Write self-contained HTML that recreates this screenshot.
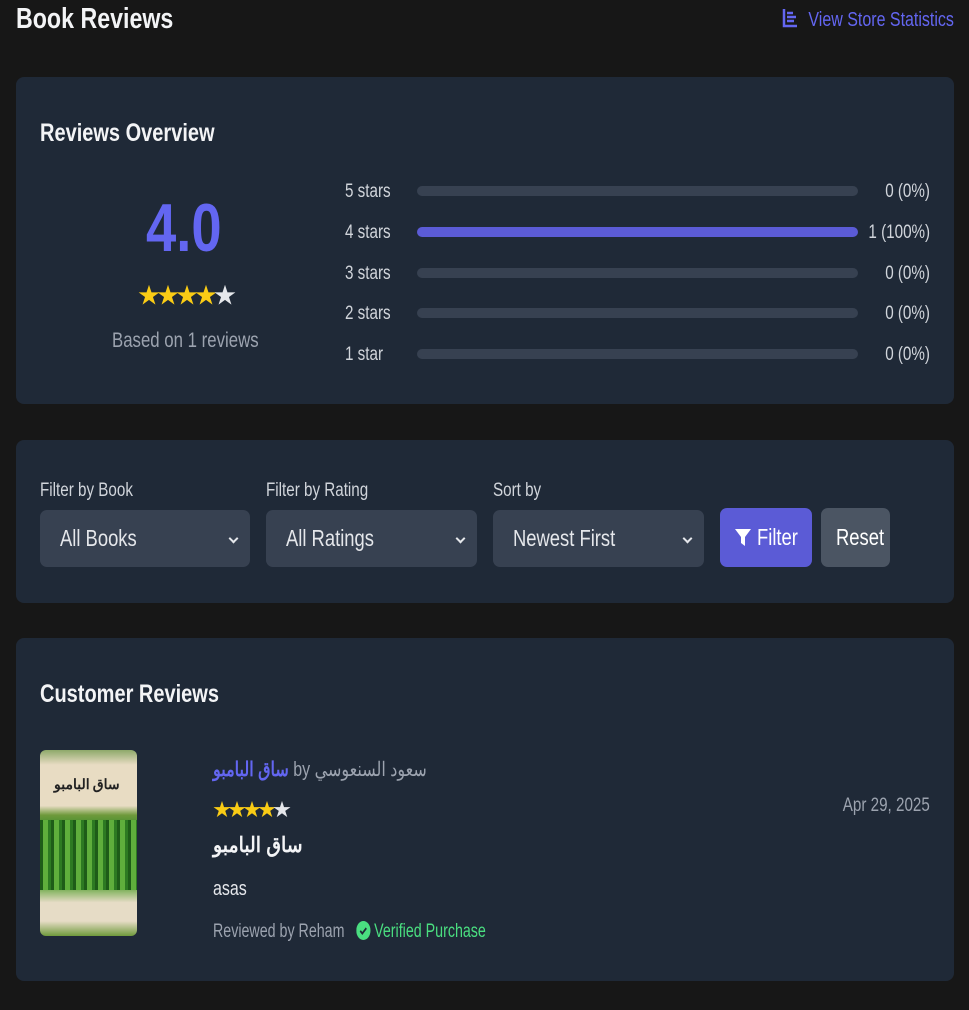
<!DOCTYPE html>
<html><head><meta charset="utf-8"><style>
*{box-sizing:border-box;margin:0;padding:0}
body{width:969px;height:1010px;background:#171717;font-family:"Liberation Sans","Noto Sans CJK SC",sans-serif;color:#e5e7eb;position:relative;overflow:hidden}
.abs{position:absolute;white-space:nowrap}
.n{display:inline-block;transform:scaleX(.8);transform-origin:0 50%;white-space:nowrap}
.r{transform-origin:100% 50%}
h1{position:absolute;left:16px;top:3px;font-size:29px;font-weight:bold;color:#f3f4f6}
.link{position:absolute;right:15px;top:8px;font-size:20px;color:#6366f1;white-space:nowrap}
.card{position:absolute;left:16px;width:938px;background:#1f2937;border-radius:8px}
h2{position:absolute;left:24px;font-size:25px;font-weight:bold;color:#f3f4f6;white-space:nowrap}
.lbl{position:absolute;font-size:19px;color:#d1d5db;white-space:nowrap}
.bar{position:absolute;left:401px;width:441px;height:10px;border-radius:5px;background:#374151}
.cnt{position:absolute;right:24px;font-size:19px;color:#d1d5db;white-space:nowrap}
.sel{position:absolute;top:70px;height:57px;background:#374151;border-radius:7px;font-size:23px;color:#e5e7eb;padding:15px 20px;white-space:nowrap}
.sel:after{content:"";position:absolute;right:13px;top:25px;width:5px;height:5px;border-right:2px solid #e5e7eb;border-bottom:2px solid #e5e7eb;transform:rotate(45deg)}
.btn{position:absolute;top:68px;height:59px;border-radius:7px;font-size:23px;color:#fff;padding:16px 15px;white-space:nowrap}
.star{color:#facc15}
</style></head><body>
<h1><span class="n">Book Reviews</span></h1>
<div class="link"><svg width="16" height="20" viewBox="0 0 16 20" style="vertical-align:-2px"><path d="M2 1v17h13" stroke="#6366f1" stroke-width="2.5" fill="none"/><path d="M5 5h6M5 9h9M5 13h7" stroke="#6366f1" stroke-width="2.5"/></svg><span class="n r" style="margin-left:-26px">View Store Statistics</span></div>

<div class="card" style="top:77px;height:327px">
<h2 style="top:42px"><span class="n">Reviews Overview</span></h2>
<div class="abs" style="left:130px;top:112px;font-size:68px;font-weight:bold;color:#6366f1"><span class="n">4.0</span></div>
<div class="abs" style="left:122px;top:201px;font-size:22px;letter-spacing:-3px"><span class="star">★★★★</span><span style="color:#e5e7eb">★</span></div>
<div class="abs" style="left:96px;top:252px;font-size:21px;color:#9ca3af"><span class="n">Based on 1 reviews</span></div>
<div class="lbl" style="left:329px;top:104px"><span class="n">5 stars</span></div><div class="bar" style="top:109px"></div><div class="cnt" style="top:104px"><span class="n r">0 (0%)</span></div>
<div class="lbl" style="left:329px;top:145px"><span class="n">4 stars</span></div><div class="bar" style="top:150px;background:#5b5bd6"></div><div class="cnt" style="top:145px"><span class="n r">1 (100%)</span></div>
<div class="lbl" style="left:329px;top:186px"><span class="n">3 stars</span></div><div class="bar" style="top:191px"></div><div class="cnt" style="top:186px"><span class="n r">0 (0%)</span></div>
<div class="lbl" style="left:329px;top:226px"><span class="n">2 stars</span></div><div class="bar" style="top:231px"></div><div class="cnt" style="top:226px"><span class="n r">0 (0%)</span></div>
<div class="lbl" style="left:329px;top:267px"><span class="n">1 star</span></div><div class="bar" style="top:272px"></div><div class="cnt" style="top:267px"><span class="n r">0 (0%)</span></div>
</div>

<div class="card" style="top:440px;height:163px">
<div class="lbl" style="left:24px;top:40px"><span class="n">Filter by Book</span></div>
<div class="lbl" style="left:250px;top:40px"><span class="n">Filter by Rating</span></div>
<div class="lbl" style="left:477px;top:40px"><span class="n">Sort by</span></div>
<div class="sel" style="left:24px;width:210px"><span class="n">All Books</span></div>
<div class="sel" style="left:250px;width:211px"><span class="n">All Ratings</span></div>
<div class="sel" style="left:477px;width:211px"><span class="n">Newest First</span></div>
<div class="btn" style="left:704px;width:92px;background:#5b5bd6"><svg width="16" height="18" viewBox="0 0 16 18" style="vertical-align:-2px"><path d="M0 0h16L10 8v9l-4-3V8z" fill="#fff"/></svg> <span class="n">Filter</span></div>
<div class="btn" style="left:805px;width:69px;background:#4b5563"><span class="n">Reset</span></div>
</div>

<div class="card" style="top:638px;height:343px">
<h2 style="top:42px"><span class="n">Customer Reviews</span></h2>
<div class="abs" style="left:24px;top:112px;width:97px;height:186px;border-radius:6px;overflow:hidden;background:linear-gradient(#8ea96a,#e8dcc3 8%,#e8dcc3 30%,#6f9a3c 35%,#3a8a2a 42%,#2f7a20 70%,#8db86a 76%,#e6dcc6 82%,#e6dcc6 92%,#6f9a3c)">
<div class="abs" style="left:0;top:70px;width:97px;height:70px;background:repeating-linear-gradient(90deg,#1e5c18 0 3px,#5fae3c 3px 8px,#2d7a22 8px 11px)"></div>
<div class="abs" style="left:14px;top:24px;font-size:14px;font-weight:bold;color:#222;font-family:'Noto Sans CJK SC',sans-serif">ساق البامبو</div>
</div>
<div class="abs" style="left:197px;top:119px;font-size:20px;color:#9ca3af"><span class="n"><b style="color:#6366f1">ساق البامبو</b> by سعود السنعوسي</span></div>
<div class="abs" style="left:197px;top:158px;font-size:18px;letter-spacing:-3px"><span class="star">★★★★</span><span>★</span></div>
<div class="abs" style="left:197px;top:195px;font-size:21px;font-weight:bold;color:#f3f4f6"><span class="n" style="transform:scaleX(.9)">ساق البامبو</span></div>
<div class="abs" style="left:197px;top:240px;font-size:20px;color:#e5e7eb"><span class="n">asas</span></div>
<div class="abs" style="left:197px;top:283px;font-size:19px;color:#9ca3af"><span class="n" style="transform:scaleX(.75)">Reviewed by Reham <span style="margin-left:10px;color:#4ade80"><svg width="19" height="19" viewBox="0 0 16 16" style="vertical-align:-3px"><circle cx="8" cy="8" r="8" fill="#4ade80"/><path d="M4.5 8.3l2.3 2.2 4.5-4.5" stroke="#1f2937" stroke-width="1.8" fill="none"/></svg> Verified Purchase</span></span></div>
<div class="abs" style="right:24px;top:157px;font-size:19px;color:#9ca3af"><span class="n r">Apr 29, 2025</span></div>
</div>
</body></html>
